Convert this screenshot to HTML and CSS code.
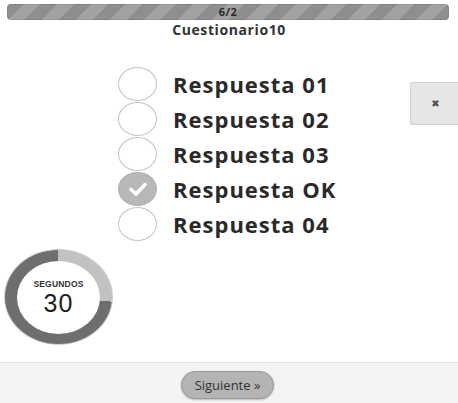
FILE: index.html
```html
<!DOCTYPE html>
<html lang="es">
<head>
<meta charset="utf-8">
<title>Cuestionario10</title>
<link rel="stylesheet" href="styles.css">
</head>
<body>
<div class="page">
  <div class="progress"><span class="progress-label">6/2</span></div>
  <div class="title">Cuestionario10</div>
  <div class="main">
    <ul class="options">
      <li class="option"><span class="radio"></span><span class="label">Respuesta 01</span></li>
      <li class="option"><span class="radio"></span><span class="label">Respuesta 02</span></li>
      <li class="option"><span class="radio"></span><span class="label">Respuesta 03</span></li>
      <li class="option"><span class="radio checked"><svg class="check" viewBox="0 0 20 16" width="20" height="16"><path d="M3 8.5 L8 13 L17 3.5" fill="none" stroke="#fff" stroke-width="3.6" stroke-linecap="round" stroke-linejoin="round"/></svg></span><span class="label">Respuesta OK</span></li>
      <li class="option"><span class="radio"></span><span class="label">Respuesta 04</span></li>
    </ul>
    <button class="close" type="button">&#x2716;</button>
  </div>
  <div class="timer">
    <div class="timer-inner">
      <span class="timer-caption">SEGUNDOS</span>
      <span class="timer-value">30</span>
    </div>
  </div>
  <div class="footer">
    <button class="next" type="button">Siguiente &raquo;</button>
  </div>
</div>
</body>
</html>
```
FILE: styles.css
```css
html, body {
  margin: 0;
  padding: 0;
  background: #ffffff;
}
body {
  font-family: "Open Sans", "DejaVu Sans", sans-serif;
  color: #2e2e2e;
}
.page {
  width: 458px;
  height: 403px;
  display: flex;
  flex-direction: column;
  overflow: hidden;
}
.progress {
  margin: 4px 9px 0 7px;
  height: 16px;
  border-radius: 4px;
  background-color: #8e8e8e;
  background-image: repeating-linear-gradient(
    -45deg,
    #8e8e8e 0px,
    #8e8e8e 12px,
    #a2a2a2 12px,
    #a2a2a2 24px
  );
  box-shadow: inset 0 0 0 1px rgba(0,0,0,0.08);
  display: flex;
  align-items: flex-end;
  justify-content: center;
  overflow: hidden;
}
.progress-label {
  font-size: 11px;
  font-weight: 700;
  line-height: 12px;
  margin-bottom: 2px;
  letter-spacing: 0.5px;
  color: #2a2a2a;
}
.title {
  text-align: center;
  font-size: 14px;
  font-weight: 700;
  line-height: 16px;
  letter-spacing: 0.6px;
  margin-top: 2px;
  color: #333333;
}
.main {
  display: flex;
  align-items: flex-start;
  margin-top: 28px;
}
.options {
  list-style: none;
  margin: 0 0 0 118px;
  padding: 0;
}
.option {
  display: flex;
  align-items: center;
  height: 35px;
}
.radio {
  box-sizing: border-box;
  width: 39px;
  height: 34px;
  border-radius: 50%;
  border: 1.5px solid #c4c4c4;
  margin-right: 16px;
  display: flex;
  align-items: center;
  justify-content: center;
  flex: none;
}
.radio.checked {
  background: #b8b8b8;
  border-color: #b0b0b0;
}
.label {
  font-size: 22px;
  font-weight: 700;
  color: #2a2a2a;
  letter-spacing: 1px;
  line-height: 30px;
}
.close {
  margin: 16px 0 0 auto;
  width: 48px;
  height: 43px;
  box-sizing: border-box;
  background: #e6e6e6;
  border: 1px solid #d2d2d2;
  border-right: none;
  border-radius: 3px 0 0 3px;
  color: #505050;
  font-size: 10px;
  padding: 0 0 0 2px;
  font-family: "DejaVu Sans", sans-serif;
}
.timer {
  margin: 8px 0 0 4px;
  width: 109px;
  height: 96px;
  border-radius: 50%;
  box-sizing: border-box;
  border: 1px solid #cfcfcf;
  background: conic-gradient(#c2c2c2 0deg 95deg, #6e6e6e 95deg 360deg);
  display: flex;
  align-items: center;
  justify-content: center;
}
.timer-inner {
  width: 83px;
  height: 73px;
  border-radius: 50%;
  background: #ffffff;
  display: flex;
  flex-direction: column;
  align-items: center;
  justify-content: center;
  font-family: "Liberation Sans", Arial, sans-serif;
  color: #222222;
}
.timer-caption {
  font-size: 8.5px;
  font-weight: 700;
  line-height: 10px;
  letter-spacing: 0.2px;
  margin-top: 2px;
  color: #333333;
}
.timer-value {
  font-size: 25px;
  line-height: 29px;
  letter-spacing: 1px;
  font-weight: 400;
  color: #1e1e1e;
}
.footer {
  margin-top: auto;
  height: 41px;
  box-sizing: border-box;
  border-top: 1px solid #e2e2e2;
  background: #f4f4f4;
  display: flex;
  justify-content: center;
  padding: 8px 0 0 0;
}
.next {
  width: 93px;
  height: 28px;
  box-sizing: border-box;
  border-radius: 14px;
  background: #b4b4b4;
  border: 1px solid #9a9a9a;
  box-shadow: 0 1px 2px rgba(0,0,0,0.25);
  font-family: "Open Sans", sans-serif;
  font-size: 13px;
  color: #333333;
  padding: 0;
  margin-right: 3px;
}
```
